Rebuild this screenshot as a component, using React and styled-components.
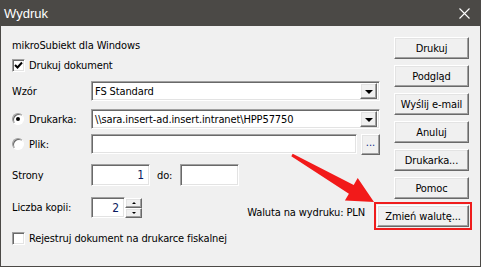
import React from 'react'
import styled, { createGlobalStyle, css } from 'styled-components'

const GlobalStyle = createGlobalStyle`
  html, body {
    margin: 0;
    padding: 0;
    background: #ffffff;
  }
  body {
    font-family: "DejaVu Sans Condensed", "DejaVu Sans", sans-serif;
    font-size: 11px;
    letter-spacing: -0.12px;
    color: #000;
  }
`

const raised = css`
  border: 1px solid;
  border-color: #ffffff #696969 #696969 #ffffff;
  box-shadow: inset -1px -1px 0 #a0a0a0, inset 1px 1px 0 #e3e3e3;
  background: #f0f0f0;
`

const sunken = css`
  border: 1px solid;
  border-color: #a0a0a0 #ffffff #ffffff #a0a0a0;
  box-shadow: inset 1px 1px 0 #696969, inset -1px -1px 0 #e3e3e3;
  background: #ffffff;
`

const Window = styled.div`
  width: 481px;
  height: 267px;
  display: flex;
  flex-direction: column;
  position: relative;
  overflow: hidden;
`

const TitleBar = styled.div`
  height: 26px;
  flex-shrink: 0;
  background: #4b4946;
  color: #fff;
  display: flex;
  align-items: center;
  justify-content: space-between;
  padding: 0 11px 0 4px;
  font-family: "Liberation Sans", Arial, sans-serif;
  font-size: 13px;
  letter-spacing: 0;
`

const Body = styled.div`
  flex: 1;
  background: #f0f0f0;
  border: 1px solid #4b4946;
  border-top: none;
  display: flex;
  padding: 0 11px;
  gap: 14px;
`

const LeftPanel = styled.div`
  width: 368px;
  display: flex;
  flex-direction: column;
  padding-top: 12px;
`

const Row = styled.div`
  display: flex;
  align-items: center;
  height: ${p => p.$h}px;
  margin-top: ${p => p.$mt || 0}px;
`

const Label = styled.span`
  width: 79px;
  flex-shrink: 0;
`

const Text = styled.span`
  white-space: nowrap;
`

const Box = styled.span`
  ${sunken};
  box-sizing: border-box;
  width: 13px;
  height: 13px;
  margin-right: 4px;
  flex-shrink: 0;
  display: inline-flex;
  align-items: center;
  justify-content: center;
`

const Radio = styled.span`
  box-sizing: border-box;
  width: 12px;
  height: 12px;
  border-radius: 50%;
  border: 1px solid;
  border-color: #a0a0a0 #ffffff #ffffff #a0a0a0;
  box-shadow: inset 1px 1px 0 #696969;
  background: #fff;
  margin: 0 5px 0 0;
  flex-shrink: 0;
  display: inline-flex;
  align-items: center;
  justify-content: center;
  &::after {
    content: '';
    width: 4px;
    height: 4px;
    border-radius: 50%;
    background: ${p => (p.$on ? '#000' : 'transparent')};
  }
`

const Combo = styled.div`
  ${sunken};
  box-sizing: border-box;
  width: 289px;
  height: 20px;
  display: flex;
  align-items: center;
  padding: 2px 2px 2px 3px;
`

const ComboText = styled.span`
  flex: 1;
  white-space: nowrap;
`

const DropBtn = styled.span`
  ${raised};
  box-sizing: border-box;
  width: 17px;
  height: 16px;
  display: flex;
  align-items: center;
  justify-content: center;
  &::after {
    content: '';
    border-left: 4px solid transparent;
    border-right: 4px solid transparent;
    border-top: 4px solid #000;
    margin-top: 1px;
  }
`

const Input = styled.div`
  ${sunken};
  box-sizing: border-box;
  width: ${p => p.$w}px;
  height: ${p => p.$h || 20}px;
  display: flex;
  align-items: center;
  justify-content: flex-end;
  padding: 0 5px;
  color: #0a1a60;
  font-size: 12px;
`

const SmallBtn = styled.span`
  ${raised};
  box-sizing: border-box;
  width: 19px;
  height: 21px;
  margin-left: auto;
  display: flex;
  align-items: flex-end;
  justify-content: center;
  padding-bottom: 5px;
  font-size: 11px;
  color: #0a2a8a;
  letter-spacing: 0;
`

const Spin = styled.div`
  display: flex;
  flex-direction: column;
`

const SpinBtn = styled.span`
  ${raised};
  box-sizing: border-box;
  width: 17px;
  height: 10px;
  display: flex;
  align-items: center;
  justify-content: center;
  &::after {
    content: '';
    border-left: 2px solid transparent;
    border-right: 2px solid transparent;
    ${p => (p.$up ? 'border-bottom: 2px solid #000;' : 'border-top: 2px solid #000;')}
  }
`

const Currency = styled.span`
  margin-left: auto;
  margin-right: 15px;
  align-self: flex-end;
  white-space: nowrap;
  line-height: 13px;
  margin-bottom: -1px;
`

const ButtonColumn = styled.div`
  width: 75px;
  display: flex;
  flex-direction: column;
  align-items: flex-end;
  gap: 6px;
  padding-top: 11px;
`

const Button = styled.div`
  ${raised};
  box-sizing: border-box;
  width: ${p => p.$w || 75}px;
  height: 22px;
  flex-shrink: 0;
  display: flex;
  align-items: center;
  justify-content: center;
  white-space: nowrap;
  ${p => p.$marked && css`
    outline: 2px solid #ef1c1c;
    outline-offset: 1px;
  `}
`

const Overlay = styled.svg`
  position: absolute;
  left: 0;
  top: 0;
  pointer-events: none;
`

const buttons = ['Drukuj', 'Podgląd', 'Wyślij e-mail', 'Anuluj', 'Drukarka...', 'Pomoc']

const App = () => {
  return (
    <>
      <GlobalStyle />
      <Window>
        <TitleBar>
          <span>Wydruk</span>
          <svg width="11" height="11" viewBox="0 0 11 11">
            <path d="M0.5 0.5 L10.5 10.5 M10.5 0.5 L0.5 10.5" stroke="#fff" strokeWidth="1.1" />
          </svg>
        </TitleBar>
        <Body>
          <LeftPanel>
            <Row $h={14}>
              <Text>mikroSubiekt dla Windows</Text>
            </Row>
            <Row $h={13} $mt={7}>
              <Box>
                <svg width="9" height="9" viewBox="0 0 9 9">
                  <path d="M1 4 L3.5 6.5 L8 1.5" stroke="#000" strokeWidth="2" fill="none" />
                </svg>
              </Box>
              <Text>Drukuj dokument</Text>
            </Row>
            <Row $h={20} $mt={9}>
              <Label>Wzór</Label>
              <Combo>
                <ComboText>FS Standard</ComboText>
                <DropBtn />
              </Combo>
            </Row>
            <Row $h={20} $mt={8}>
              <Label>
                <Row $h={13}>
                  <Radio $on />
                  <Text>Drukarka:</Text>
                </Row>
              </Label>
              <Combo>
                <ComboText>\\sara.insert-ad.insert.intranet\HPP57750</ComboText>
                <DropBtn />
              </Combo>
            </Row>
            <Row $h={22} $mt={4}>
              <Label>
                <Row $h={13}>
                  <Radio />
                  <Text>Plik:</Text>
                </Row>
              </Label>
              <Input $w={266} />
              <SmallBtn>...</SmallBtn>
            </Row>
            <Row $h={22} $mt={9}>
              <Label>Strony</Label>
              <Input $w={59} $h={22}>1</Input>
              <Text style={{ margin: '0 8px 0 7px' }}>do:</Text>
              <Input $w={59} $h={22} />
            </Row>
            <Row $h={21} $mt={11}>
              <Label>Liczba kopii:</Label>
              <Input $w={34} $h={21}>2</Input>
              <Spin>
                <SpinBtn $up />
                <SpinBtn />
              </Spin>
              <Currency>Waluta na wydruku: PLN</Currency>
            </Row>
            <Row $h={13} $mt={14}>
              <Box />
              <Text>Rejestruj dokument na drukarce fiskalnej</Text>
            </Row>
          </LeftPanel>
          <ButtonColumn>
            {buttons.map(b => (
              <Button key={b}>{b}</Button>
            ))}
            <Button $w={92} $marked>Zmień walutę...</Button>
          </ButtonColumn>
        </Body>
        <Overlay width="481" height="267" viewBox="0 0 481 267">
          <polygon
            points="292.7,153.7 353.7,184.9 357.7,178 374,202 344.9,200.6 348.9,193.7 291.3,156.3"
            fill="#f21a1a"
          />
        </Overlay>
      </Window>
    </>
  )
}

export default App
